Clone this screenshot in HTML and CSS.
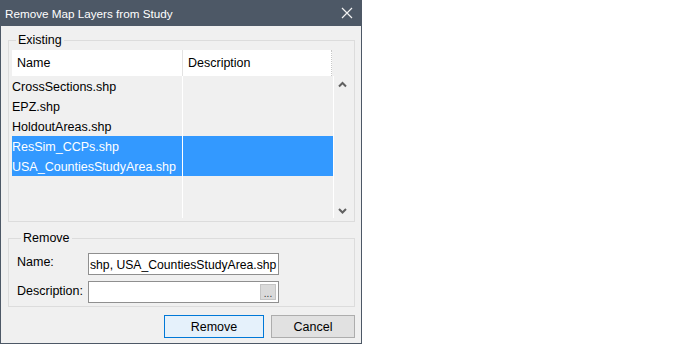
FILE: index.html
```html
<!DOCTYPE html>
<html lang="en">
<head>
    <meta charset="UTF-8">
    <title>Remove Map Layers from Study</title>
    <link rel="stylesheet" href="styles.css">
</head>
<body>

<div class="dialog">
    <div class="titlebar">
        <span class="title">Remove Map Layers from Study</span>
        <svg class="close" width="12" height="12" viewBox="0 0 12 12">
            <path d="M1 1 L11 11 M11 1 L1 11" stroke="#f2f2f2" stroke-width="1.2" fill="none"/>
        </svg>
    </div>

    <div class="content">
        <fieldset class="group existing">
            <legend>Existing</legend>
            <div class="list-wrap">
                <div class="grid">
                    <div class="grid-head">
                        <div class="hcell name">Name</div>
                        <div class="hcell desc">Description</div>
                    </div>
                    <div class="grid-body">
                        <div class="row"><div class="cell name">CrossSections.shp</div><div class="cell desc"></div></div>
                        <div class="row"><div class="cell name">EPZ.shp</div><div class="cell desc"></div></div>
                        <div class="row"><div class="cell name">HoldoutAreas.shp</div><div class="cell desc"></div></div>
                        <div class="row selected"><div class="cell name">ResSim_CCPs.shp</div><div class="cell desc"></div></div>
                        <div class="row selected"><div class="cell name">USA_CountiesStudyArea.shp</div><div class="cell desc"></div></div>
                        <div class="row filler"><div class="cell name"></div><div class="cell desc"></div></div>
                    </div>
                </div>
                <div class="vscroll">
                    <svg width="20" height="10" viewBox="0 0 20 10">
                        <path d="M5 7.5 L8.5 4 L12 7.5" stroke="#606060" stroke-width="2" fill="none"/>
                    </svg>
                    <svg width="20" height="10" viewBox="0 0 20 10">
                        <path d="M5 3 L8.5 6.5 L12 3" stroke="#606060" stroke-width="2" fill="none"/>
                    </svg>
                </div>
            </div>
        </fieldset>

        <fieldset class="group remove">
            <legend>Remove</legend>
            <div class="field">
                <label>Name:</label>
                <div class="textbox scrolled">shp, USA_CountiesStudyArea.shp</div>
            </div>
            <div class="field">
                <label>Description:</label>
                <div class="textbox browse-box">
                    <span class="browse">...</span>
                </div>
            </div>
        </fieldset>

        <div class="buttons">
            <button class="btn primary">Remove</button>
            <button class="btn cancel">Cancel</button>
        </div>
    </div>
</div>

</body>
</html>
```

FILE: styles.css
```css
body {
    margin: 0;
    background: #ffffff;
    font-family: "Liberation Sans", Arial, sans-serif;
    font-size: 12px;
    color: #000;
}

.dialog {
    width: 360px;
    height: 343px;
    background: #f0f0f0;
    border: 1px solid #4d5866;
    border-top: none;
    display: flex;
    flex-direction: column;
}

.titlebar {
    height: 26px;
    margin: 0 -1px;
    padding: 0 9px 0 5px;
    background: #4d5866;
    display: flex;
    align-items: center;
    justify-content: space-between;
    color: #fff;
}

.title {
    font-size: 11.7px;
}

.content {
    padding: 7px 6px 0 7px;
}

.group {
    margin: 0;
    border: 1px solid #dcdcdc;
    padding: 0;
    min-width: 0;
}

.group legend {
    padding: 0 2px;
    margin-left: 4px;
    line-height: 14px;
    font-size: 12.5px;
}

.existing {
    padding: 3px 0 3px 3px;
}

.list-wrap {
    display: flex;
    height: 168px;
}

.grid {
    width: 322px;
    display: flex;
    flex-direction: column;
}

.grid-head {
    width: 320px;
    height: 26px;
    background: #fff;
    display: flex;
    border-right: 1px dotted #c8c8c8;
    box-sizing: border-box;
}

.hcell {
    line-height: 26px;
    font-size: 12.5px;
    padding-left: 5px;
}

.hcell.name {
    width: 165px;
    border-right: 1px solid #e3e3e3;
}

.hcell.desc {
    flex: 1;
}

.grid-body {
    flex: 1;
    display: flex;
    flex-direction: column;
}

.row {
    display: flex;
    height: 20px;
}

.row.filler {
    flex: 1;
}

.cell {
    line-height: 18px;
    padding-top: 2px;
    font-size: 12.5px;
    border-right: 1px solid #fff;
    white-space: nowrap;
}

.cell.name {
    width: 170px;
}

.cell.desc {
    width: 150px;
}

.row.selected .cell {
    background: #3399ff;
    color: #fff;
}

.vscroll {
    width: 20px;
    display: flex;
    flex-direction: column;
    justify-content: space-between;
    padding: 29px 0 2px;
}

.remove {
    margin-top: 9px;
    padding: 8px 8px 3px;
}

.field {
    display: flex;
    align-items: center;
}

.field + .field {
    margin-top: 6px;
}

.field label {
    width: 71px;
    font-size: 12.5px;
    margin-top: -4px;
}

.field:last-child label {
    margin-top: -2px;
}

.textbox {
    width: 191px;
    height: 22px;
    box-sizing: border-box;
    border: 1px solid #8f8f8f;
    background: #fff;
    display: flex;
    align-items: center;
    overflow: hidden;
    padding: 2px 2px 0 1px;
    font-size: 12.2px;
    white-space: nowrap;
}

.browse-box {
    justify-content: flex-end;
    padding-top: 0;
}

.browse {
    width: 16px;
    height: 16px;
    box-sizing: border-box;
    background: #dadada;
    border: 1px solid #c4c4c4;
    font-size: 10px;
    line-height: 18px;
    text-align: center;
    color: #333;
}

.buttons {
    margin-top: 8px;
    display: flex;
    justify-content: flex-end;
    gap: 7px;
}

.btn {
    height: 23px;
    font-family: "Liberation Sans", Arial, sans-serif;
    font-size: 12.5px;
    padding: 0;
    color: #000;
}

.btn.primary {
    width: 100px;
    background: #e5f1fb;
    border: 1px solid #0078d7;
}

.btn.cancel {
    width: 84px;
    background: #e1e1e1;
    border: 1px solid #adadad;
}
```
